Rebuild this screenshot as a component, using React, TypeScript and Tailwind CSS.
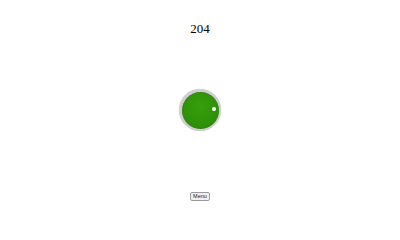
export default function App() {
  return (
    <div className="relative flex h-[222px] w-[400px] flex-col items-center bg-white">
      <div className="mt-[21px] font-['Liberation_Serif',serif] text-[13px] leading-[16px] text-black">204</div>
      <div className="mt-[52px] flex h-[42px] w-[42px] items-center justify-center rounded-full bg-[#cfcfcf] p-[2.5px] shadow-[0_0_1px_rgba(0,0,0,0.25)]">
        <div className="relative h-full w-full rounded-full bg-[radial-gradient(circle_at_50%_40%,#36a00c,#2a8806)] shadow-[inset_0_0_1px_rgba(0,0,0,0.4)]">
          <div className="absolute left-[30px] top-[15px] h-[4px] w-[4px] rounded-full bg-white" />
        </div>
      </div>
      <button className="mt-[61px] rounded-[2px] border border-[#9a9a9a] bg-[#f0f0f0] px-[2px] font-['Liberation_Sans',sans-serif] text-[5.5px] leading-[6.5px] text-[#222]">
        Menu
      </button>
    </div>
  );
}
